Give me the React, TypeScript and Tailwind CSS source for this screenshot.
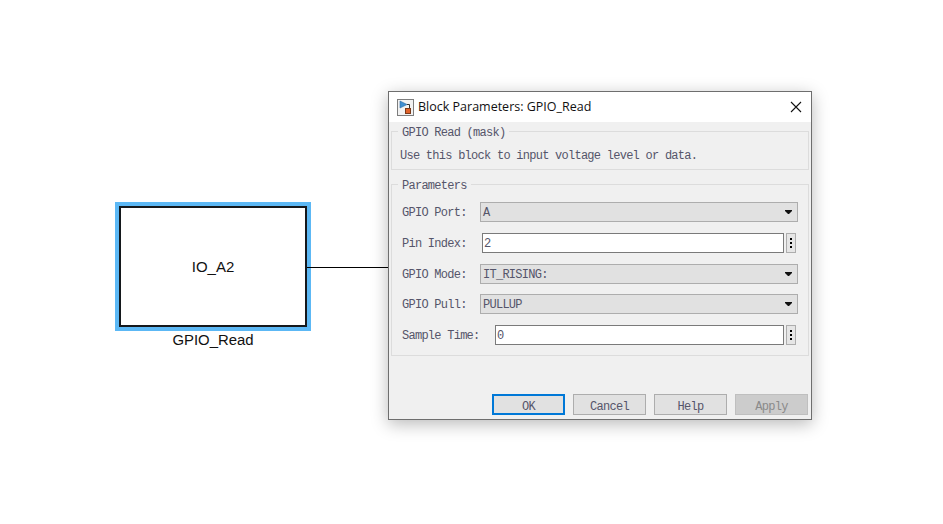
import React from 'react';

const mono = "font-['Liberation_Mono',monospace] text-[12px] tracking-[-0.74px] text-[#55556a]";

function Combo({ label, value, labelWidth = 'w-[78px]', top }: { label: string; value: string; labelWidth?: string; top: string }) {
  return (
    <div className={`flex items-center h-[20px] ${top}`}>
      <span className={`${labelWidth} shrink-0 pt-[2px] ${mono}`}>{label}</span>
      <div className="w-[318px] h-[20px] flex items-center justify-between bg-[#e1e1e1] border border-[#adadad] pl-[2px] pr-[5px]">
        <span className={`pt-[2px] ${mono}`}>{value}</span>
        <svg width="7" height="4" viewBox="0 0 7 4">
          <path d="M0 0h7v1L4 4H3L0 1z" fill="#111" />
        </svg>
      </div>
    </div>
  );
}

function Field({ label, value, labelWidth, inputWidth, top }: { label: string; value: string; labelWidth: string; inputWidth: string; top: string }) {
  return (
    <div className={`flex items-center h-[20px] ${top}`}>
      <span className={`${labelWidth} shrink-0 pt-[2px] ${mono}`}>{label}</span>
      <div className={`${inputWidth} h-[20px] flex items-center bg-white border border-[#7a7a7a] pl-[1px]`}>
        <span className={`pt-[2px] ${mono}`}>{value}</span>
      </div>
      <div className="ml-[2px] w-[10px] h-[20px] flex flex-col items-center justify-center gap-[2px] bg-[#e6e6e6] border border-[#adadad]">
        <span className="w-[2px] h-[2px] bg-black" />
        <span className="w-[2px] h-[2px] bg-black" />
        <span className="w-[2px] h-[2px] bg-black" />
      </div>
    </div>
  );
}

function Btn({ label, primary, disabled }: { label: string; primary?: boolean; disabled?: boolean }) {
  const cls = primary
    ? 'bg-[#e1e1e1] border-2 border-[#0078d7]'
    : disabled
      ? 'bg-[#cccccc] border border-[#bfbfbf]'
      : 'bg-[#e1e1e1] border border-[#adadad]';
  return (
    <div className={`w-[73px] h-[21px] flex items-center justify-center pt-[5px] ${cls}`}>
      <span className={disabled ? "font-['Liberation_Mono',monospace] text-[12px] tracking-[-0.74px] text-[#8a8a8a]" : mono}>{label}</span>
    </div>
  );
}

export default function App() {
  return (
    <div className="relative w-[943px] h-[524px] bg-white overflow-hidden">
      {/* simulink block */}
      <div className="absolute left-[115px] top-[202px] w-[196px] h-[129px] bg-[#5cb8f5] p-[4px]">
        <div className="w-full h-full bg-white border-2 border-[#14181c] flex items-center justify-center pt-[1px]">
          <span className="font-['Liberation_Sans',sans-serif] text-[15px] text-[#111]">IO_A2</span>
        </div>
      </div>
      <div className="absolute left-[115px] top-[331px] w-[196px] text-center font-['Liberation_Sans',sans-serif] text-[14.9px] leading-[18px] text-[#111]">
        GPIO_Read
      </div>
      <div className="absolute left-[307px] top-[267px] w-[82px] h-[1px] bg-black" />

      {/* dialog */}
      <div className="absolute left-[388px] top-[91px] w-[424px] h-[329px] flex flex-col bg-[#f0f0f0] border border-[#6e6e6e] shadow-[0_4px_16px_rgba(0,0,0,0.28)]">
        <div className="h-[30px] shrink-0 bg-white flex items-center pl-[8px] pr-[9px]">
          <svg width="17" height="17" viewBox="0 0 17 17">
            <rect x="0.500" y="0.500" width="16" height="16" fill="#f2f2f2" stroke="#7d7d7d" />
            <path d="M3 2l7 3.500L3 9z" fill="#3f8fd0" stroke="#2a6aa5" strokeWidth="0.600" />
            <path d="M10 5.500h2.500V9" stroke="#333" fill="none" />
            <rect x="8.500" y="9.500" width="5" height="5" fill="#e0622a" stroke="#7a3a1a" />
          </svg>
          <span className="ml-[4px] font-['Open_Sans',sans-serif] text-[12.5px] text-[#111]">Block Parameters: GPIO_Read</span>
          <svg className="ml-auto" width="12" height="12" viewBox="0 0 12 12">
            <path d="M1 1l10 10M11 1L1 11" stroke="#111" strokeWidth="1.100" />
          </svg>
        </div>

        <div className="flex-1 flex flex-col px-[2px]">
          <div className="relative mt-[9px] h-[39px] border border-[#dcdcdc] pl-[8px] pt-[17px]">
            <span className={`absolute left-[6px] top-[-6px] px-[4px] bg-[#f0f0f0] leading-[14px] ${mono}`}>GPIO Read (mask)</span>
            <span className={`block leading-[14px] ${mono}`}>Use this block to input voltage level or data.</span>
          </div>

          <div className="relative mt-[14px] h-[172px] border border-[#dcdcdc] pl-[10px] pt-[17px]">
            <span className={`absolute left-[6px] top-[-6px] px-[4px] bg-[#f0f0f0] leading-[14px] ${mono}`}>Parameters</span>
            <Combo label="GPIO Port:" value="A" top="" />
            <Field label="Pin Index:" value="2" labelWidth="w-[80px]" inputWidth="w-[302px]" top="mt-[11px]" />
            <Combo label="GPIO Mode:" value="IT_RISING:" top="mt-[11px]" />
            <Combo label="GPIO Pull:" value="PULLUP" top="mt-[10px]" />
            <Field label="Sample Time:" value="0" labelWidth="w-[93px]" inputWidth="w-[289px]" top="mt-[11px]" />
          </div>

          <div className="mt-auto mb-[4px] flex justify-end gap-[8px] pr-[1px]">
            <Btn label="OK" primary />
            <Btn label="Cancel" />
            <Btn label="Help" />
            <Btn label="Apply" disabled />
          </div>
        </div>
      </div>
    </div>
  );
}
